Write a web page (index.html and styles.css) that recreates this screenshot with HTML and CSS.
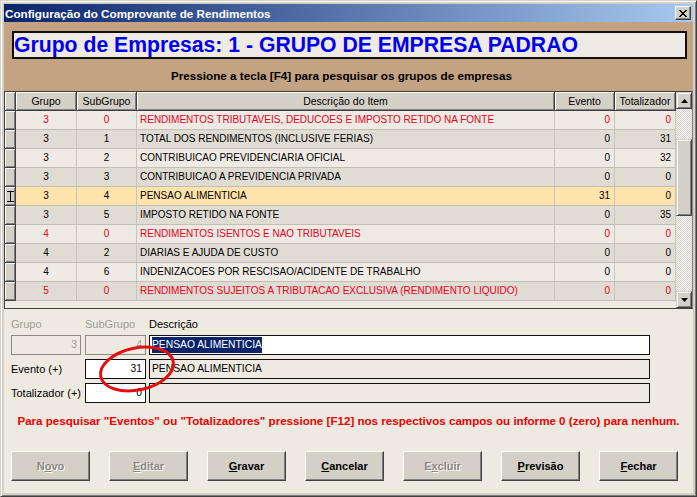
FILE: index.html
```html
<!DOCTYPE html>
<html lang="pt">
<head>
<meta charset="utf-8">
<title>Configuração do Comprovante de Rendimentos</title>
<link rel="stylesheet" href="styles.css">
</head>
<body>
<div class="window">
  <div class="titlebar">
    <span class="title">Configuração do Comprovante de Rendimentos</span>
    <span class="close"><svg width="8" height="7" viewBox="0 0 8 7"><path d="M0 0L7 7M1 0L8 7M7 0L0 7M8 0L1 7" stroke="#000" stroke-width="1"/></svg></span>
  </div>
  <div class="client">
    <div class="banner">
      <div class="company">Grupo de Empresas: 1 - GRUPO DE EMPRESA PADRAO</div>
      <div class="hint">Pressione a tecla [F4] para pesquisar os grupos de empresas</div>
    </div>

    <div class="grid">
      <div class="table">
        <div class="row head">
          <div class="ind"></div>
          <div class="c">Grupo</div>
          <div class="c">SubGrupo</div>
          <div class="c">Descrição do Item</div>
          <div class="c">Evento</div>
          <div class="c">Totalizador</div>
        </div>
        <div class="row odd red">
          <div class="ind"></div><div class="c">3</div><div class="c">0</div>
          <div class="l">RENDIMENTOS TRIBUTAVEIS, DEDUCOES E IMPOSTO RETIDO NA FONTE</div>
          <div class="r">0</div><div class="r">0</div>
        </div>
        <div class="row even">
          <div class="ind"></div><div class="c">3</div><div class="c">1</div>
          <div class="l">TOTAL DOS RENDIMENTOS (INCLUSIVE FERIAS)</div>
          <div class="r">0</div><div class="r">31</div>
        </div>
        <div class="row odd">
          <div class="ind"></div><div class="c">3</div><div class="c">2</div>
          <div class="l">CONTRIBUICAO PREVIDENCIARIA OFICIAL</div>
          <div class="r">0</div><div class="r">32</div>
        </div>
        <div class="row even">
          <div class="ind"></div><div class="c">3</div><div class="c">3</div>
          <div class="l">CONTRIBUICAO A PREVIDENCIA PRIVADA</div>
          <div class="r">0</div><div class="r">0</div>
        </div>
        <div class="row sel">
          <div class="ind"><svg width="7" height="11" viewBox="0 0 7 11"><path d="M0 0.5H7M0 10.5H7M3.5 0V11" stroke="#000" stroke-width="1"/></svg></div><div class="c">3</div><div class="c">4</div>
          <div class="l">PENSAO ALIMENTICIA</div>
          <div class="r">31</div><div class="r">0</div>
        </div>
        <div class="row even">
          <div class="ind"></div><div class="c">3</div><div class="c">5</div>
          <div class="l">IMPOSTO RETIDO NA FONTE</div>
          <div class="r">0</div><div class="r">35</div>
        </div>
        <div class="row odd red">
          <div class="ind"></div><div class="c">4</div><div class="c">0</div>
          <div class="l">RENDIMENTOS ISENTOS E NAO TRIBUTAVEIS</div>
          <div class="r">0</div><div class="r">0</div>
        </div>
        <div class="row even">
          <div class="ind"></div><div class="c">4</div><div class="c">2</div>
          <div class="l">DIARIAS E AJUDA DE CUSTO</div>
          <div class="r">0</div><div class="r">0</div>
        </div>
        <div class="row odd">
          <div class="ind"></div><div class="c">4</div><div class="c">6</div>
          <div class="l">INDENIZACOES POR RESCISAO/ACIDENTE DE TRABALHO</div>
          <div class="r">0</div><div class="r">0</div>
        </div>
        <div class="row even red">
          <div class="ind"></div><div class="c">5</div><div class="c">0</div>
          <div class="l">RENDIMENTOS SUJEITOS A TRIBUTACAO EXCLUSIVA (RENDIMENTO LIQUIDO)</div>
          <div class="r">0</div><div class="r">0</div>
        </div>
      </div>
      <div class="scrollbar">
        <div class="sbtn"><svg width="7" height="4" viewBox="0 0 7 4"><path d="M3.5 0L7 4H0Z" fill="#000"/></svg></div>
        <div class="track">
          <div class="thumb"></div>
        </div>
        <div class="sbtn"><svg width="7" height="4" viewBox="0 0 7 4"><path d="M0 0H7L3.5 4Z" fill="#000"/></svg></div>
      </div>
    </div>

    <div class="form">
      <span class="lbl dis">Grupo</span>
      <span class="lbl dis">SubGrupo</span>
      <span class="lbl">Descrição</span>

      <div class="field disabled num">3</div>
      <div class="field disabled num">4</div>
      <div class="field white"><span class="selection">PENSAO ALIMENTICIA</span></div>

      <span class="lbl side">Evento (+)</span>
      <div class="field white num">31</div>
      <div class="field ro">PENSAO ALIMENTICIA</div>

      <span class="lbl side">Totalizador (+)</span>
      <div class="field white num">0</div>
      <div class="field ro"></div>

      <svg class="mark" width="90" height="60" viewBox="0 0 90 60"><ellipse cx="45" cy="30" rx="37" ry="21" transform="rotate(-12 45 30)" fill="none" stroke="#e01010" stroke-width="3"/></svg>
    </div>

    <p class="msg">Para pesquisar "Eventos" ou "Totalizadores" pressione [F12] nos respectivos campos ou informe 0 (zero) para nenhum.</p>

    <div class="buttons">
      <div class="btn off">N<u>o</u>vo</div>
      <div class="btn off"><u>E</u>ditar</div>
      <div class="btn"><u>G</u>ravar</div>
      <div class="btn"><u>C</u>ancelar</div>
      <div class="btn off">E<u>x</u>cluir</div>
      <div class="btn"><u>P</u>revisão</div>
      <div class="btn"><u>F</u>echar</div>
    </div>
  </div>
</div>
</body>
</html>
```
FILE: styles.css
```css
* { box-sizing: border-box; }
html, body { margin: 0; padding: 0; }
body {
  width: 697px;
  height: 497px;
  overflow: hidden;
  font-family: "Liberation Sans", Arial, sans-serif;
  font-size: 11px;
  color: #000;
  background: #d4d0c8;
}
.window {
  width: 697px;
  height: 497px;
  border: 1px solid;
  border-color: #d4d0c8 #404040 #404040 #d4d0c8;
  box-shadow: inset 1px 1px 0 #fff, inset -1px -1px 0 #808080;
  padding: 3px;
  background: #d4d0c8;
  display: flex;
  flex-direction: column;
}
.titlebar {
  height: 18px;
  flex: none;
  background: linear-gradient(to right, #0a246a, #a6caf0);
  display: flex;
  align-items: center;
  padding: 0 2px 0 1px;
}
.title {
  flex: 1;
  color: #fff;
  font-weight: bold;
  font-size: 11.7px;
  white-space: nowrap;
}
.close {
  width: 16px;
  height: 14px;
  background: #d4d0c8;
  border: 1px solid;
  border-color: #fff #404040 #404040 #fff;
  box-shadow: inset -1px -1px 0 #808080;
  display: flex;
  align-items: center;
  justify-content: center;
}
.client {
  flex: 1;
  display: flex;
  flex-direction: column;
  background: #eeeae2;
}
.banner {
  height: 69px;
  flex: none;
  background: #c4a383;
  padding: 9px 6px 0 8px;
}
.company {
  height: 28px;
  border: 2px solid #101010;
  background: #efebe4;
  color: #0000f0;
  font-weight: bold;
  font-size: 21.2px;
  line-height: 24px;
  padding-left: 0;
  white-space: nowrap;
}
.hint {
  text-align: center;
  font-weight: bold;
  font-size: 11.7px;
  margin-top: 10px;
  padding-right: 16px;
}
.grid {
  height: 218px;
  flex: none;
  border: 1px solid #404040;
  border-right-color: #808080;
  display: flex;
  background: #eeeae2;
}
.table {
  width: 671px;
}
.row {
  display: grid;
  grid-template-columns: 11px 61px 60px 418px 60px 61px;
  height: 19px;
  font-size: 10px;
}
.row > div {
  border-right: 1px solid #c8c4bc;
  border-bottom: 1px solid #c2beb6;
  line-height: 18px;
  padding: 0 3px;
  white-space: nowrap;
  overflow: hidden;
}
.row .c { text-align: center; }
.row .r { text-align: right; padding-right: 4px; }
.row .l { padding-left: 3px; }
.head { font-size: 10.5px; }
.odd { background: #efebe4; }
.even { background: #e0dcd4; }
.sel { background: #fee3ab; }
.red { color: #e8001c; }
.row > .ind {
  background: #d4d0c8;
  border-right: 1px solid #404040;
  border-bottom: 1px solid #404040;
  box-shadow: inset 1px 1px 0 #fff, inset -1px -1px 0 #808080;
  padding: 0;
  display: flex;
  align-items: center;
  justify-content: center;
}
.head > div {
  background: #d4d0c8;
  border-right: 1px solid #404040;
  border-bottom: 1px solid #404040;
  box-shadow: inset 1px 1px 0 #fff, inset -1px -1px 0 #808080;
}
.scrollbar {
  width: 16px;
  display: flex;
  flex-direction: column;
}
.sbtn {
  height: 17px;
  flex: none;
  background: #d4d0c8;
  border: 1px solid;
  border-color: #d4d0c8 #404040 #404040 #d4d0c8;
  box-shadow: inset 1px 1px 0 #fff, inset -1px -1px 0 #808080;
  display: flex;
  align-items: center;
  justify-content: center;
}
.track {
  flex: 1;
  background-color: #fff;
  background-image: repeating-conic-gradient(#d4d0c8 0 25%, #fff 0 50%);
  background-size: 2px 2px;
  padding-top: 30px;
}
.thumb {
  height: 77px;
  background: #d4d0c8;
  border: 1px solid;
  border-color: #d4d0c8 #404040 #404040 #d4d0c8;
  box-shadow: inset 1px 1px 0 #fff, inset -1px -1px 0 #808080;
}
.form {
  position: relative;
  display: grid;
  grid-template-columns: 70px 61px 500px;
  grid-template-rows: 16px 20px 20px 20px;
  column-gap: 4px;
  row-gap: 4px;
  padding: 6px 0 0 7px;
  flex: none;
}
.form > :nth-child(3n) { margin-left: -1px; }
.lbl {
  align-self: end;
  line-height: 13px;
  white-space: nowrap;
}
.lbl.dis { color: #a09c94; }
.lbl.side { align-self: center; }
.field {
  border: 1px solid #101010;
  line-height: 18px;
  padding: 0 3px 0 2px;
  white-space: nowrap;
  overflow: hidden;
  font-size: 10.3px;
}
.field.num { text-align: right; }
.field.disabled {
  border-color: #8c8880;
  color: #a09c94;
  background: #eeeae2;
}
.field.white { background: #fff; }
.field.ro { background: #eeeae2; }
.selection {
  background: #0a246a;
  color: #fff;
  display: inline-block;
  line-height: 16px;
  margin-top: 1px;
}
.mark {
  position: absolute;
  left: 88px;
  top: 30px;
}
.msg {
  margin: 11px 0 0;
  text-align: center;
  color: #ee0000;
  font-weight: bold;
  font-size: 11.6px;
}
.buttons {
  display: flex;
  gap: 19px;
  padding-left: 7px;
  margin-top: 24px;
}
.btn {
  width: 79px;
  height: 30px;
  background: #d4d0c8;
  border: 1px solid;
  border-color: #fff #404040 #404040 #fff;
  box-shadow: inset -1px -1px 0 #808080;
  font-weight: bold;
  font-size: 11px;
  display: flex;
  align-items: center;
  justify-content: center;
}
.btn.off {
  color: #8c8880;
  text-shadow: 1px 1px 0 #fff;
}
```
